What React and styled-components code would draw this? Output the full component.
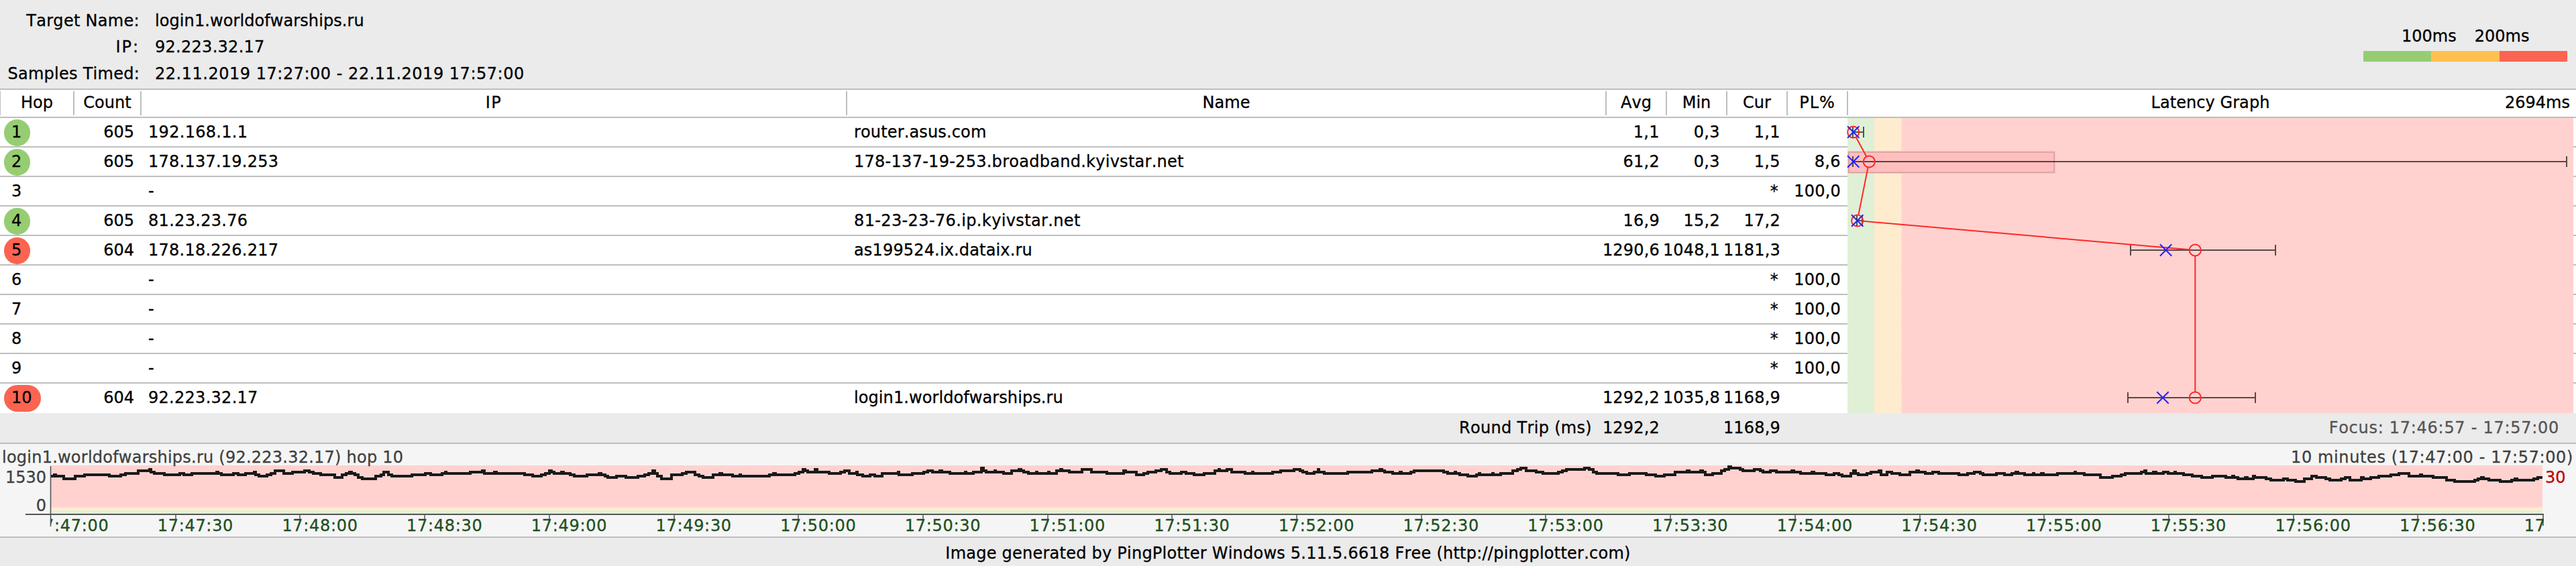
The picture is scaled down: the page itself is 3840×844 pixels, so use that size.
import React from "react";
import styled, { createGlobalStyle } from "styled-components";

const GlobalStyle = createGlobalStyle`
  body {
    margin: 0;
    background: #ebebeb;
  }
`;

const FONT_SIZE = 24;

// Verdana sets punctuation wider than DejaVu, spread the difference over the text
const WIDER = {
  ".": 0.046,
  ",": 0.046,
  ":": 0.117,
  "-": 0.093,
  "(": 0.064,
  ")": 0.064,
  " ": 0.034,
  "*": 0.136,
  "%": 0.126,
  I: 0.126,
};

const tracking = (text) => {
  const extra = [...text].reduce((sum, ch) => sum + (WIDER[ch] || 0), 0);
  return ((extra * FONT_SIZE) / text.length).toFixed(3);
};

const Page = styled.div`
  width: 3840px;
  height: 844px;
  background: #ebebeb;
  color: #000;
  font-family: Verdana, "DejaVu Sans", sans-serif;
  font-size: ${FONT_SIZE}px;
  font-kerning: none;
  -webkit-text-stroke: 0.3px;
  white-space: pre;
  overflow: hidden;
`;

const Tracked = styled.span`
  letter-spacing: ${(props) => props.$track}px;
`;

const Label = ({ children }) => (
  <Tracked $track={tracking(children)}>{children}</Tracked>
);

const Header = styled.header`
  display: flex;
  justify-content: space-between;
  box-sizing: border-box;
  height: 134px;
  border-bottom: 2px solid #bebebe;
`;

const TargetInfo = styled.div`
  display: grid;
  grid-template-columns: 208px auto;
  column-gap: 23px;
  padding-top: 12px;
  line-height: 39.4px;
  align-content: start;
`;

const InfoLabel = styled.div`
  text-align: right;
`;

const Legend = styled.div`
  width: 304px;
  margin: 39px 13px 0 0;
`;

const LegendLabels = styled.div`
  display: flex;
  gap: 27px;
  padding-left: 57px;
  line-height: 30px;
  height: 37px;
`;

const LegendBar = styled.div`
  display: flex;
  height: 16px;
`;

const LegendZone = styled.div`
  flex: 1;
  background: ${(props) => props.$color};
`;

const columns = "111px 100px 1052px 1132px 90px 90px 90px 90px 1fr";

const HeadRow = styled.div`
  display: grid;
  grid-template-columns: ${columns};
  box-sizing: border-box;
  height: 42px;
  padding: 2px 0;
  background: #fff;
  border-bottom: 2px solid #bebebe;
`;

const HeadCell = styled.div`
  box-sizing: border-box;
  line-height: 34px;
  height: 36px;
  text-align: center;
  border-right: 2px solid #bebebe;

  &:first-child {
    border-left: 1px solid #bebebe;
  }
`;

const GraphHead = styled.div`
  display: grid;
  grid-template-columns: 1fr auto 1fr;
  padding: 0 9px 0 4px;
  line-height: 34px;
`;

const ScaleMax = styled.div`
  text-align: right;
`;

const Hops = styled.div`
  position: relative;
  background: #fff;
`;

const HopRow = styled.div`
  display: grid;
  grid-template-columns: ${columns};
  box-sizing: border-box;
  height: 44px;
  line-height: 42px;
  border-bottom: 2px solid #bebebe;

  &:last-of-type {
    border-bottom-color: #fff;
  }
`;

const HopCell = styled.div`
  padding-left: 6px;
`;

const HopBadge = styled.div`
  display: inline-block;
  box-sizing: border-box;
  height: 40px;
  margin-top: 2px;
  padding: 0 13px 0 11px;
  line-height: 38px;
  border-radius: 20px;
  background: ${(props) => props.$color || "transparent"};
`;

const TextCell = styled.div`
  padding-left: 10px;
`;

const NumCell = styled.div`
  display: flex;
  justify-content: flex-end;
  padding-right: 11px;
`;

const LatencyChart = styled.svg`
  position: absolute;
  top: 0;
  right: 4px;
  width: 1082px;
  height: 440px;
  overflow: visible;
`;

const SummaryRow = styled.div`
  display: grid;
  grid-template-columns: 2395px 90px 90px 90px 1fr;
  box-sizing: border-box;
  height: 46px;
  line-height: 45px;
  border-bottom: 2px solid #bebebe;
`;

const SummaryLabel = styled.div`
  padding-right: 22px;
  text-align: right;
`;

const Focus = styled.div`
  padding-right: 25px;
  text-align: right;
  color: #555;
`;

const TimelinePanel = styled.section`
  box-sizing: border-box;
  height: 140px;
  background: #f5f5f5;
  border-bottom: 2px solid #bebebe;
`;

const TimelineTitle = styled.div`
  position: relative;
  z-index: 1;
  display: flex;
  justify-content: space-between;
  height: 32px;
  padding: 0 4px 0 3px;
  line-height: 40px;
  color: #404040;
`;

const TimelineBody = styled.div`
  display: grid;
  grid-template-columns: 74px 3718px 1fr;
  height: 74px;
`;

const YAxis = styled.div`
  display: flex;
  flex-direction: column;
  gap: 5px;
  padding-right: 5px;
  line-height: 37px;
  text-align: right;
  color: #404040;
`;

const TimelineChart = styled.svg`
  width: 3718px;
  height: 74px;
  overflow: visible;
`;

const LossScale = styled.div`
  padding-left: 2px;
  line-height: 37px;
  color: #c00000;
`;

const TimeAxis = styled.div`
  display: flex;
  width: 3716px;
  margin-left: 76px;
  overflow: hidden;
  line-height: 32px;
  color: #1e501e;
`;

const TimeTick = styled.div`
  flex: 0 0 185.7px;

  &:first-child {
    margin-left: -27px;
  }
`;

const Footer = styled.footer`
  text-align: center;
  line-height: 46px;
`;

const GREEN = "#96cd73";
const YELLOW = "#ffc050";
const RED = "#fb6450";

const hops = [
  { hop: "1", color: GREEN, count: "605", ip: "192.168.1.1", name: "router.asus.com", avg: "1,1", min: "0,3", cur: "1,1" },
  { hop: "2", color: GREEN, count: "605", ip: "178.137.19.253", name: "178-137-19-253.broadband.kyivstar.net", avg: "61,2", min: "0,3", cur: "1,5", pl: "8,6" },
  { hop: "3", ip: "-", cur: "*", pl: "100,0" },
  { hop: "4", color: GREEN, count: "605", ip: "81.23.23.76", name: "81-23-23-76.ip.kyivstar.net", avg: "16,9", min: "15,2", cur: "17,2" },
  { hop: "5", color: RED, count: "604", ip: "178.18.226.217", name: "as199524.ix.dataix.ru", avg: "1290,6", min: "1048,1", cur: "1181,3" },
  { hop: "6", ip: "-", cur: "*", pl: "100,0" },
  { hop: "7", ip: "-", cur: "*", pl: "100,0" },
  { hop: "8", ip: "-", cur: "*", pl: "100,0" },
  { hop: "9", ip: "-", cur: "*", pl: "100,0" },
  { hop: "10", color: RED, count: "604", ip: "92.223.32.17", name: "login1.worldofwarships.ru", avg: "1292,2", min: "1035,8", cur: "1168,9" },
];

// x positions of min / max whiskers, average circle and current cross
const samples = [
  { y: 21, from: 8, to: 24, avg: 8.7, cur: 8.7 },
  { y: 65, from: 8, to: 1072, avg: 32.3, cur: 8.7 },
  { y: 153, from: 14, to: 22, avg: 14.7, cur: 14.7 },
  { y: 197, from: 422, to: 638, avg: 518.3, cur: 474.6 },
  { y: 417, from: 418, to: 608, avg: 518.3, cur: 470 },
];

// line between two average circles, stopping at their outlines
const connect = (a, b) => {
  const dx = b.avg - a.avg;
  const dy = b.y - a.y;
  const len = Math.hypot(dx, dy);
  const ox = (dx / len) * 9;
  const oy = (dy / len) * 9;
  return `M${a.avg + ox} ${a.y + oy}L${b.avg - ox} ${b.y - oy}`;
};

const LatencyGraph = () => (
  <LatencyChart viewBox="0 0 1082 440">
    <rect width="40" height="440" fill="#dff0d6" />
    <rect x="40" width="40.4" height="440" fill="#ffebcd" />
    <rect x="80.4" width="1001.6" height="440" fill="#ffd2cf" />
    <rect y="49" width="310" height="34" fill="#ffbfbf" />
    <rect x="2" y="51" width="306" height="30" fill="none" stroke="#e0a6a6" strokeWidth="2" />
    {samples.map(({ y, from, to }) => (
      <path
        key={y}
        d={`M${from} ${y}H${to}M${from} ${y - 8}V${y + 8}M${to} ${y - 8}V${y + 8}`}
        stroke="#000"
        strokeOpacity="0.65"
        strokeWidth="2"
      />
    ))}
    <g fill="none" stroke="#ff2828" strokeWidth="2">
      {samples.slice(1).map((s, i) => (
        <path key={s.y} d={connect(samples[i], s)} />
      ))}
      {samples.map((s) => (
        <circle key={s.y} cx={s.avg} cy={s.y} r="8.6" />
      ))}
    </g>
    {samples.map(({ y, cur }) => (
      <path
        key={y}
        d={`M${cur - 8.7} ${y - 8.7}L${cur + 8.7} ${y + 8.7}M${cur + 8.7} ${y - 8.7}L${cur - 8.7} ${y + 8.7}`}
        stroke="#2323ff"
        strokeWidth="2"
      />
    ))}
  </LatencyChart>
);

// [x, level] pairs, one level is two pixels down
const trace = [
  [75, 8], [79, 7], [84, 8], [96, 10], [110, 8], [124, 7], [164, 8], [178, 7], [185, 6], [204, 4],
  [221, 3], [226, 5], [231, 6], [246, 7], [266, 6], [275, 7], [284, 6], [321, 5], [326, 6], [331, 7],
  [346, 6], [356, 7], [364, 6], [377, 5], [382, 7], [387, 8], [396, 7], [402, 6], [408, 4], [424, 6],
  [434, 5], [452, 4], [462, 5], [468, 6], [479, 7], [500, 9], [508, 7], [514, 6], [519, 5], [525, 6],
  [530, 7], [535, 9], [541, 10], [558, 8], [566, 7], [570, 5], [580, 7], [585, 8], [612, 7], [632, 6],
  [643, 7], [657, 6], [662, 5], [666, 6], [699, 5], [717, 4], [723, 6], [735, 5], [741, 6], [783, 7],
  [795, 8], [805, 7], [811, 6], [817, 4], [823, 5], [827, 6], [835, 5], [841, 6], [851, 7], [857, 8],
  [873, 7], [891, 6], [897, 7], [903, 8], [907, 9], [917, 8], [934, 9], [949, 8], [959, 7], [965, 6],
  [971, 4], [977, 6], [981, 8], [987, 10], [999, 7], [1015, 6], [1021, 5], [1037, 7], [1043, 8], [1049, 9],
  [1061, 7], [1071, 6], [1077, 7], [1093, 8], [1101, 7], [1105, 8], [1145, 7], [1151, 6], [1157, 7], [1183, 6],
  [1189, 5], [1195, 3], [1201, 4], [1205, 5], [1213, 3], [1219, 5], [1237, 6], [1251, 5], [1257, 4], [1267, 6],
  [1275, 5], [1279, 7], [1287, 8], [1295, 7], [1305, 8], [1313, 6], [1337, 5], [1341, 7], [1358, 6], [1375, 5],
  [1381, 4], [1391, 5], [1399, 4], [1405, 5], [1417, 6], [1437, 5], [1441, 6], [1449, 5], [1461, 2], [1467, 4],
  [1471, 5], [1481, 4], [1485, 5], [1497, 6], [1506, 4], [1517, 3], [1523, 4], [1527, 5], [1534, 6], [1543, 5],
  [1547, 6], [1561, 5], [1565, 6], [1573, 4], [1579, 3], [1584, 4], [1595, 5], [1611, 3], [1628, 5], [1651, 6],
  [1673, 4], [1679, 5], [1695, 7], [1703, 6], [1709, 5], [1721, 4], [1729, 3], [1740, 5], [1745, 6], [1759, 5],
  [1769, 6], [1781, 7], [1793, 6], [1809, 4], [1815, 3], [1819, 4], [1827, 3], [1837, 5], [1857, 6], [1865, 5],
  [1869, 6], [1895, 5], [1907, 4], [1927, 3], [1939, 4], [1943, 5], [1949, 6], [1957, 5], [1963, 3], [1967, 5],
  [1975, 6], [2007, 5], [2043, 4], [2055, 3], [2061, 4], [2065, 5], [2077, 6], [2085, 5], [2090, 6], [2101, 5],
  [2106, 4], [2153, 5], [2159, 6], [2167, 5], [2171, 6], [2177, 7], [2189, 8], [2199, 7], [2203, 6], [2207, 7],
  [2223, 6], [2227, 7], [2235, 6], [2253, 4], [2260, 3], [2265, 2], [2276, 4], [2291, 5], [2301, 6], [2321, 5],
  [2327, 4], [2333, 3], [2360, 2], [2370, 3], [2376, 5], [2381, 6], [2413, 7], [2427, 6], [2455, 7], [2469, 8],
  [2479, 7], [2495, 5], [2513, 4], [2519, 5], [2533, 4], [2539, 5], [2543, 7], [2551, 6], [2564, 4], [2569, 3],
  [2575, 1], [2581, 2], [2595, 3], [2599, 4], [2613, 3], [2625, 4], [2629, 5], [2637, 4], [2649, 5], [2669, 4],
  [2675, 5], [2685, 6], [2699, 5], [2705, 6], [2723, 7], [2732, 6], [2742, 7], [2747, 8], [2757, 6], [2761, 4],
  [2767, 6], [2771, 7], [2781, 6], [2787, 5], [2799, 4], [2805, 7], [2811, 5], [2821, 6], [2833, 7], [2845, 5],
  [2855, 4], [2861, 5], [2871, 6], [2879, 5], [2891, 6], [2921, 7], [2931, 6], [2941, 5], [2953, 6], [2957, 7],
  [2974, 6], [2989, 7], [2997, 6], [3003, 5], [3009, 6], [3019, 7], [3029, 6], [3033, 7], [3041, 6], [3047, 7],
  [3065, 6], [3091, 5], [3095, 6], [3108, 7], [3132, 9], [3147, 8], [3160, 7], [3166, 6], [3190, 5], [3195, 4],
  [3200, 6], [3208, 5], [3215, 6], [3223, 5], [3233, 6], [3240, 5], [3244, 6], [3256, 7], [3269, 8], [3283, 9],
  [3296, 8], [3319, 9], [3326, 8], [3331, 9], [3337, 10], [3345, 9], [3351, 10], [3357, 8], [3362, 9], [3379, 10],
  [3386, 11], [3402, 10], [3411, 11], [3423, 12], [3433, 10], [3444, 8], [3454, 9], [3468, 10], [3474, 11], [3488, 10],
  [3494, 9], [3504, 11], [3518, 9], [3524, 10], [3532, 9], [3544, 8], [3562, 7], [3574, 6], [3592, 8], [3606, 7],
  [3611, 8], [3628, 9], [3648, 11], [3660, 12], [3687, 11], [3692, 10], [3697, 9], [3703, 10], [3711, 11], [3728, 12],
  [3742, 11], [3747, 10], [3753, 11], [3775, 10], [3781, 9],
];

const tracePath = () => {
  let d = `M2 ${trace[0][1] * 2}`;
  for (let i = 1; i < trace.length; i++) {
    const [x, level] = trace[i];
    const shift = level < trace[i - 1][1] ? 2 : -1;
    d += `H${x - 74 + shift}V${level * 2}`;
  }
  return `${d}H3716`;
};

const ticks = Array.from({ length: 19 }, (_, i) => Math.round(2 + (i + 1) * 185.7));

const TimelineGraph = () => (
  <TimelineChart viewBox="0 0 3718 74">
    <rect x="2" width="3714" height="62.7" fill="#ffd2cf" />
    <rect x="2" y="62.7" width="3714" height="4.7" fill="#ffebcd" />
    <rect x="2" y="67.4" width="3714" height="5" fill="#dff0d6" />
    <path d={tracePath()} fill="none" stroke="#1a1a1a" strokeWidth="4" />
    <path d="M-36 73H3718" stroke="#555" strokeWidth="2" />
    <path d="M1.5 1V91M3717 73V90" stroke="#555" strokeWidth="1.6" />
    {ticks.map((x) => (
      <path key={x} d={`M${x} 74V82`} stroke="#808080" strokeWidth="2" />
    ))}
  </TimelineChart>
);

const times = Array.from({ length: 21 }, (_, i) => {
  const minute = 47 + Math.floor(i / 2);
  return `17:${minute}:${i % 2 ? "30" : "00"}`;
});

const heads = ["Hop", "Count", "IP", "Name", "Avg", "Min", "Cur", "PL%"];

const App = () => {
  return (
    <Page>
      <GlobalStyle />
      <Header>
        <TargetInfo>
          <InfoLabel><Label>Target Name:</Label></InfoLabel>
          <div><Label>login1.worldofwarships.ru</Label></div>
          <InfoLabel><Label>IP:</Label></InfoLabel>
          <div><Label>92.223.32.17</Label></div>
          <InfoLabel><Label>Samples Timed:</Label></InfoLabel>
          <div><Label>22.11.2019 17:27:00 - 22.11.2019 17:57:00</Label></div>
        </TargetInfo>
        <Legend>
          <LegendLabels>
            <span>100ms</span>
            <span>200ms</span>
          </LegendLabels>
          <LegendBar>
            <LegendZone $color={GREEN} />
            <LegendZone $color={YELLOW} />
            <LegendZone $color={RED} />
          </LegendBar>
        </Legend>
      </Header>

      <HeadRow>
        {heads.map((head) => (
          <HeadCell key={head}>
            <Label>{head}</Label>
          </HeadCell>
        ))}
        <GraphHead>
          <span />
          <Label>Latency Graph</Label>
          <ScaleMax>2694ms</ScaleMax>
        </GraphHead>
      </HeadRow>

      <Hops>
        {hops.map((row) => (
          <HopRow key={row.hop}>
            <HopCell>
              <HopBadge $color={row.color}>{row.hop}</HopBadge>
            </HopCell>
            <NumCell>{row.count}</NumCell>
            <TextCell><Label>{row.ip}</Label></TextCell>
            <TextCell>{row.name && <Label>{row.name}</Label>}</TextCell>
            <NumCell>{row.avg && <Label>{row.avg}</Label>}</NumCell>
            <NumCell>{row.min && <Label>{row.min}</Label>}</NumCell>
            <NumCell>{row.cur && <Label>{row.cur}</Label>}</NumCell>
            <NumCell>{row.pl && <Label>{row.pl}</Label>}</NumCell>
          </HopRow>
        ))}
        <LatencyGraph />
      </Hops>

      <SummaryRow>
        <SummaryLabel><Label>Round Trip (ms)</Label></SummaryLabel>
        <NumCell><Label>1292,2</Label></NumCell>
        <span />
        <NumCell><Label>1168,9</Label></NumCell>
        <Focus><Label>Focus: 17:46:57 - 17:57:00</Label></Focus>
      </SummaryRow>

      <TimelinePanel>
        <TimelineTitle>
          <Label>login1.worldofwarships.ru (92.223.32.17) hop 10</Label>
          <Label>10 minutes (17:47:00 - 17:57:00)</Label>
        </TimelineTitle>
        <TimelineBody>
          <YAxis>
            <div>1530</div>
            <div>0</div>
          </YAxis>
          <TimelineGraph />
          <LossScale>30</LossScale>
        </TimelineBody>
        <TimeAxis>
          {times.map((time) => (
            <TimeTick key={time}>
              <Label>{time}</Label>
            </TimeTick>
          ))}
        </TimeAxis>
      </TimelinePanel>

      <Footer>
        <Label>Image generated by PingPlotter Windows 5.11.5.6618 Free (http://pingplotter.com)</Label>
      </Footer>
    </Page>
  );
};

export default App;
